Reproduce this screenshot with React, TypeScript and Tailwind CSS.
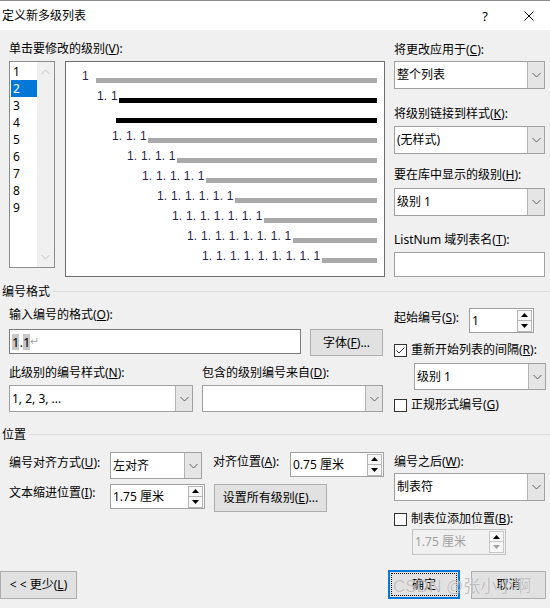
import React from "react";

const Chevron = ({ up = false, color = "#5f5f5f" }: { up?: boolean; color?: string }) => (
  <svg width="9" height="6" viewBox="0 0 9 6">
    <path
      d={up ? "M0.5 5 L4.5 1 L8.5 5" : "M0.5 1 L4.5 5 L8.5 1"}
      fill="none"
      stroke={color}
      strokeWidth="1"
    />
  </svg>
);

const Label = ({ children, className = "" }: { children: React.ReactNode; className?: string }) => (
  <div className={`h-[16px] leading-[16px] whitespace-nowrap shrink-0 ${className}`}>{children}</div>
);

const Select = ({ children, className = "" }: { children?: React.ReactNode; className?: string }) => (
  <div className={`flex shrink-0 border border-[#a0a0a0] bg-white ${className}`}>
    <div className="flex-1 flex items-center pl-[2px] whitespace-nowrap overflow-hidden leading-[16px]">{children}</div>
    <div className="w-[17px] border-l border-[#b4b4b4] bg-[#e5e5e5] flex items-center justify-center">
      <Chevron />
    </div>
  </div>
);

const Tri = ({ up, color }: { up: boolean; color: string }) => (
  <svg width="7" height="4" viewBox="0 0 7 4">
    <polygon points={up ? "0,4 3.5,0 7,4" : "0,0 3.5,4 7,0"} fill={color} />
  </svg>
);

const Spinner = ({
  children,
  className = "",
  disabled = false,
}: {
  children: React.ReactNode;
  className?: string;
  disabled?: boolean;
}) => (
  <div
    className={`flex items-center shrink-0 border ${
      disabled ? "border-[#c4c4c4] bg-[#f0f0f0] text-[#a0a0a0]" : "border-[#a0a0a0] bg-white text-black"
    } ${className}`}
  >
    <div className="flex-1 pl-[2px] whitespace-nowrap leading-[16px]">{children}</div>
    <div className="flex flex-col mr-[1px]">
      <div className={`w-[15px] h-[11px] border ${disabled ? "border-[#c8c8c8]" : "border-[#b4b4b4]"} bg-[#f7f7f7] flex items-center justify-center`}>
        <Tri up color="#000" />
      </div>
      <div className={`w-[15px] h-[11px] border border-t-0 ${disabled ? "border-[#c8c8c8]" : "border-[#b4b4b4]"} bg-[#f7f7f7] flex items-center justify-center`}>
        <Tri up={false} color={disabled ? "#a0a0a0" : "#000"} />
      </div>
    </div>
  </div>
);

const Checkbox = ({ checked = false }: { checked?: boolean }) => (
  <div className="w-[13px] h-[13px] shrink-0 border border-[#333333] bg-white flex items-center justify-center">
    {checked && (
      <svg width="11" height="11" viewBox="0 0 11 11">
        <path d="M1.5 5.5 L4 8 L9.5 2.5" fill="none" stroke="#333333" strokeWidth="1" />
      </svg>
    )}
  </div>
);

const Button = ({ children, className = "" }: { children: React.ReactNode; className?: string }) => (
  <div
    className={`flex items-center justify-center shrink-0 bg-[#e1e1e1] border border-[#adadad] whitespace-nowrap leading-[16px] ${className}`}
  >
    {children}
  </div>
);

const Header = ({ children, className = "" }: { children: React.ReactNode; className?: string }) => (
  <div className={`flex items-center h-[16px] ${className}`}>
    <span className="pl-[2px] leading-[16px] whitespace-nowrap">{children}</span>
    <div className="flex-1 h-px bg-[#dcdcdc] ml-[3px] -mt-[1px]" />
  </div>
);

const previewRows = [
  { ml: "ml-[16px]", w: "w-[14px]", text: "1", bar: "bg-[#a9a9a9]" },
  { ml: "ml-[31px]", w: "w-[22px]", text: "1. 1", bar: "bg-black" },
  { ml: "ml-[50px]", w: "w-0", text: "", bar: "bg-black" },
  { ml: "ml-[46px]", w: "w-[36px]", text: "1. 1. 1", bar: "bg-[#a9a9a9]" },
  { ml: "ml-[61px]", w: "w-[50px]", text: "1. 1. 1. 1", bar: "bg-[#a9a9a9]" },
  { ml: "ml-[76px]", w: "w-[64px]", text: "1. 1. 1. 1. 1", bar: "bg-[#a9a9a9]" },
  { ml: "ml-[91px]", w: "w-[78px]", text: "1. 1. 1. 1. 1. 1", bar: "bg-[#a9a9a9]" },
  { ml: "ml-[106px]", w: "w-[92px]", text: "1. 1. 1. 1. 1. 1. 1", bar: "bg-[#a9a9a9]" },
  { ml: "ml-[121px]", w: "w-[106px]", text: "1. 1. 1. 1. 1. 1. 1. 1", bar: "bg-[#a9a9a9]" },
  { ml: "ml-[136px]", w: "w-[120px]", text: "1. 1. 1. 1. 1. 1. 1. 1. 1", bar: "bg-[#a9a9a9]" },
];

export default function App() {
  return (
    <div className="relative w-[550px] h-[608px] overflow-hidden bg-[#f0f0f0] text-[12px] text-black font-['Noto_Sans','Noto_Sans_CJK_SC',sans-serif]">
      {/* Title bar */}
      <div className="h-[30px] bg-white border-t border-[#8a8a8a] flex items-center">
        <span className="pl-[2px] leading-[16px]">定义新多级列表</span>
        <span className="ml-auto text-[13px] leading-[16px]">?</span>
        <svg className="ml-[36px] mr-[16px]" width="10" height="10" viewBox="0 0 10 10">
          <path d="M0.5 0.5 L9.5 9.5 M9.5 0.5 L0.5 9.5" stroke="#000" strokeWidth="1" fill="none" />
        </svg>
      </div>

      {/* Section A */}
      <div className="flex pl-[9px]">
        <div className="w-[376px] pt-[11px]">
          <Label>
            单击要修改的级别(<u>V</u>):
          </Label>
          <div className="flex mt-[4px] gap-[10px]">
            {/* Level listbox */}
            <div className="w-[46px] h-[207px] border border-[#8c8c8c] bg-white flex">
              <div className="w-[27px] pt-[1px]">
                {[1, 2, 3, 4, 5, 6, 7, 8, 9].map((n) => (
                  <div
                    key={n}
                    className={`ml-[1px] h-[17px] leading-[17px] pl-[2px] ${
                      n === 2 ? "bg-[#0078d7] text-white" : "text-black"
                    }`}
                  >
                    {n}
                  </div>
                ))}
              </div>
              <div className="flex-1 bg-[#f0f0f0] flex flex-col items-center justify-between pt-[7px] pb-[7px]">
                <Chevron up color="#c2c2c2" />
                <Chevron color="#c2c2c2" />
              </div>
            </div>
            {/* Preview */}
            <div className="w-[320px] h-[216px] border border-[#6e6e6e] bg-white pt-[8px] pr-[7px] font-['Liberation_Sans',sans-serif] text-[12px] text-[#1f2548]">
              {previewRows.map((r, i) => (
                <div key={i} className="flex items-start h-[20px]">
                  <span className={`${r.ml} ${r.w} shrink-0 whitespace-nowrap leading-[12px] tracking-[0.2px]`}>{r.text}</span>
                  <div className={`flex-1 h-[5px] mt-[8px] ${r.bar}`} />
                </div>
              ))}
            </div>
          </div>
        </div>

        <div className="ml-[9px] w-[151px] pt-[12px]">
          <Label>
            将更改应用于(<u>C</u>):
          </Label>
          <Select className="mt-[3px] w-[151px] h-[28px]">整个列表</Select>
          <Label className="mt-[17px]">
            将级别链接到样式(<u>K</u>):
          </Label>
          <Select className="mt-[4px] w-[151px] h-[28px]">(无样式)</Select>
          <Label className="mt-[13px]">
            要在库中显示的级别(<u>H</u>):
          </Label>
          <Select className="mt-[5px] w-[151px] h-[28px]">级别 1</Select>
          <Label className="mt-[16px]">
            ListNum 域列表名(<u>T</u>):
          </Label>
          <div className="mt-[4px] w-[151px] h-[25px] border border-[#a0a0a0] bg-white" />
        </div>
      </div>

      <Header className="mt-[7px]">编号格式</Header>

      {/* Section B */}
      <div className="flex items-start pl-[9px]">
        <div className="w-[374px] pt-[7px]">
          <Label>
            输入编号的格式(<u>O</u>):
          </Label>
          <div className="flex items-start mt-[6px]">
            <div className="w-[292px] h-[25px] border border-[#7a7a7a] bg-white flex items-center pl-[2px] text-[13px] leading-[16px]">
              <span className="bg-[#c8c8c8]">1</span>
              <span>.</span>
              <span className="bg-[#c8c8c8]">1</span>
              <span className="text-[#a8a8a8] text-[11px] font-['DejaVu_Sans',sans-serif]">↵</span>
            </div>
            <Button className="ml-[9px] w-[73px] h-[27px]">
              字体(<u>F</u>)...
            </Button>
          </div>
          <div className="flex mt-[9px]">
            <Label className="w-[193px]">
              此级别的编号样式(<u>N</u>):
            </Label>
            <Label>
              包含的级别编号来自(<u>D</u>):
            </Label>
          </div>
          <div className="flex mt-[4px] gap-[9px]">
            <Select className="w-[184px] h-[27px]">1, 2, 3, ...</Select>
            <Select className="w-[181px] h-[27px]" />
          </div>
        </div>

        <div className="ml-[11px] w-[152px] pt-[8px]">
          <div className="flex items-start h-[25px]">
            <Label className="w-[75px] mt-[2px]">
              起始编号(<u>S</u>):
            </Label>
            <Spinner className="w-[65px] h-[25px]">1</Spinner>
          </div>
          <div className="flex items-center h-[16px] mt-[9px]">
            <Checkbox checked />
            <span className="ml-[4px] leading-[16px] whitespace-nowrap">
              重新开始列表的间隔(<u>R</u>):
            </span>
          </div>
          <Select className="ml-[20px] mt-[5px] w-[132px] h-[27px]">级别 1</Select>
          <div className="flex items-center h-[16px] mt-[7px]">
            <Checkbox />
            <span className="ml-[4px] leading-[16px] whitespace-nowrap">
              正规形式编号(<u>G</u>)
            </span>
          </div>
        </div>
      </div>

      <Header className="mt-[14px]">位置</Header>

      {/* Section C */}
      <div className="flex items-start pl-[9px]">
        <div className="w-[376px]">
          <div className="flex items-start mt-[9px]">
            <Label className="w-[101px] mt-[3px]">
              编号对齐方式(<u>U</u>):
            </Label>
            <Select className="w-[92px] h-[27px]">左对齐</Select>
            <Label className="ml-[11px] w-[77px] mt-[2px]">
              对齐位置(<u>A</u>):
            </Label>
            <Spinner className="w-[94px] h-[25px]">0.75 厘米</Spinner>
          </div>
          <div className="flex items-start mt-[5px]">
            <Label className="w-[101px] mt-[1px]">
              文本缩进位置(<u>I</u>):
            </Label>
            <Spinner className="w-[95px] h-[25px]">1.75 厘米</Spinner>
            <Button className="ml-[9px] w-[113px] h-[28px]">
              设置所有级别(<u>E</u>)...
            </Button>
          </div>
        </div>

        <div className="ml-[9px] w-[151px] pt-[11px]">
          <Label>
            编号之后(<u>W</u>):
          </Label>
          <Select className="mt-[3px] w-[151px] h-[28px]">制表符</Select>
          <div className="flex items-center h-[16px] mt-[10px]">
            <Checkbox />
            <span className="ml-[4px] leading-[16px] whitespace-nowrap">
              制表位添加位置(<u>B</u>):
            </span>
          </div>
          <Spinner disabled className="ml-[18px] mt-[2px] w-[94px] h-[26px]">
            1.75 厘米
          </Spinner>
        </div>
      </div>

      {/* Footer */}
      <div className="flex items-center mt-[15px] h-[29px]">
        <Button className="w-[77px] h-[28px]">
          &lt; &lt; 更少(<u>L</u>)
        </Button>
        <div className="ml-auto flex items-center gap-[11px] pr-[4px]">
          <div className="w-[72px] h-[29px] border-2 border-[#0078d7] bg-[#e1e1e1] p-[1px] flex">
            <div className="flex-1 border border-dotted border-black flex items-center justify-center leading-[16px]">
              确定
            </div>
          </div>
          <Button className="w-[75px] h-[28px]">取消</Button>
        </div>
      </div>

      {/* Watermark (overlay, as in the reference) */}
      <div className="absolute left-[393px] top-[577px] text-[17px] leading-[20px] whitespace-nowrap text-[rgba(120,120,120,0.45)] [text-shadow:0_0_1px_rgba(255,255,255,0.9)] pointer-events-none font-['Liberation_Sans','Noto_Sans_CJK_SC',sans-serif]">
        CSDN @张小小啊
      </div>
    </div>
  );
}
